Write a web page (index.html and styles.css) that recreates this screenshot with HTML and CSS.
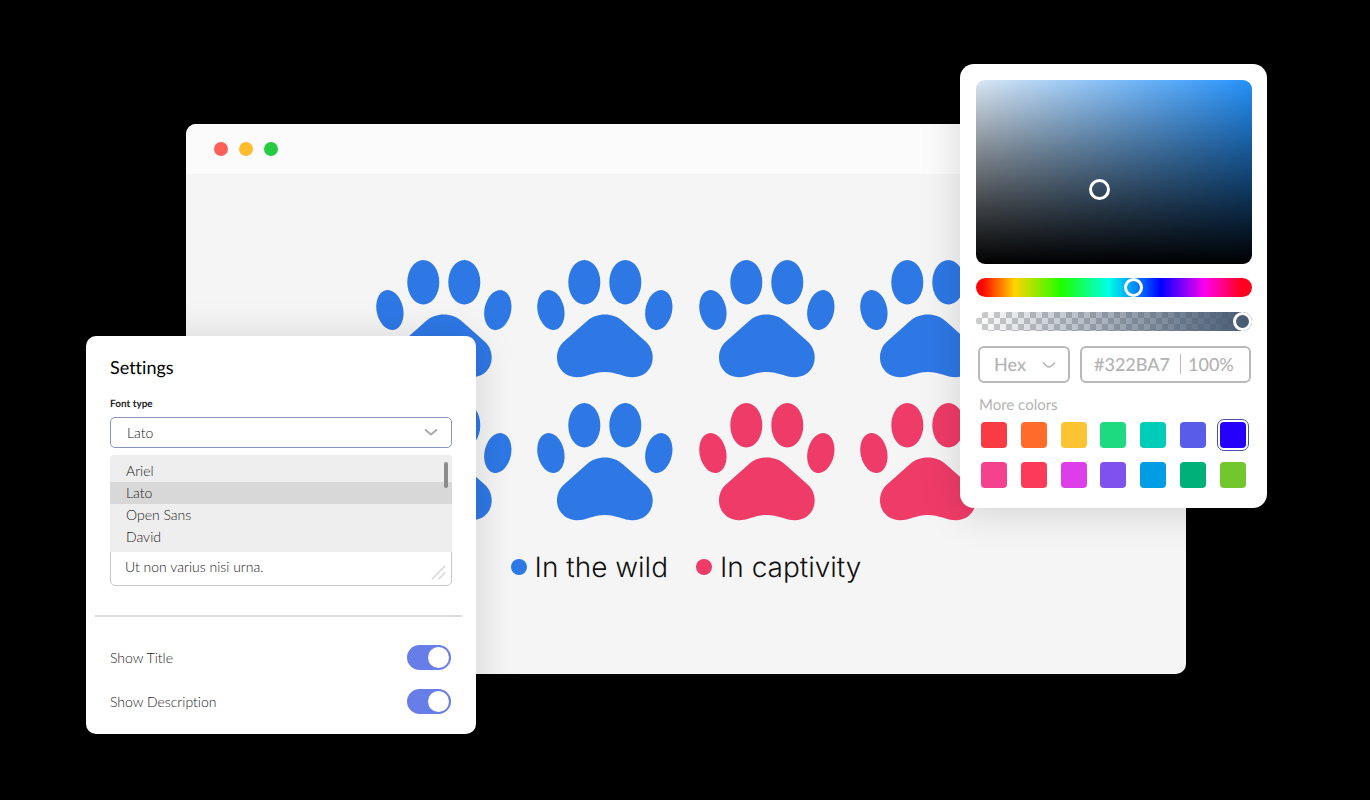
FILE: index.html
```
<!DOCTYPE html>
<html lang="en">
<head>
<meta charset="utf-8">
<title>Pictogram editor</title>
<link rel="stylesheet" href="styles.css">
</head>
<body>
<svg class="defs" aria-hidden="true">
  <symbol id="paw" viewBox="0 0 136 118">
    <ellipse cx="47.3" cy="22.2" rx="16" ry="22.2"/>
    <ellipse cx="88.3" cy="22.2" rx="16" ry="22.2"/>
    <ellipse cx="13.9" cy="50" rx="13.3" ry="20.2" transform="rotate(-12 13.9 50)"/>
    <ellipse cx="121.8" cy="50" rx="13.3" ry="20.2" transform="rotate(12 121.8 50)"/>
    <path d="M67.800 54.500C61 54.500 55 56.500 49.500 61.500L27 81.500C22.500 85.500 20 91 20 97.500C20 109 29 117.200 40 117.200C50 117.200 56 112 67.800 112C79.600 112 86 117.200 96 117.200C107 117.200 115.700 109 115.700 97.500C115.700 91 113 85.500 108.600 81.500L86.100 61.500C80.600 56.500 74.600 54.500 67.800 54.500Z"/>
  </symbol>
</svg>
<main class="stage">
  <section class="window">
    <header class="window-bar">
      <span class="dot dot-close"></span>
      <span class="dot dot-min"></span>
      <span class="dot dot-max"></span>
    </header>
    <div class="canvas">
      <div class="paws">
        <svg class="paw wild"><use href="#paw"/></svg>
        <svg class="paw wild"><use href="#paw"/></svg>
        <svg class="paw wild"><use href="#paw"/></svg>
        <svg class="paw wild"><use href="#paw"/></svg>
        <svg class="paw wild"><use href="#paw"/></svg>
        <svg class="paw wild"><use href="#paw"/></svg>
        <svg class="paw captive"><use href="#paw"/></svg>
        <svg class="paw captive"><use href="#paw"/></svg>
      </div>
      <div class="legend">
        <span class="legend-item"><i class="bullet bullet-wild"></i>In the wild</span>
        <span class="legend-item"><i class="bullet bullet-captive"></i>In captivity</span>
      </div>
    </div>
  </section>

  <section class="settings">
    <div class="settings-top">
      <h1 class="title">Settings</h1>
      <label class="field-label" for="font">Font type</label>
      <div class="combo">
        <select id="font" class="font-select">
          <option>Ariel</option>
          <option selected>Lato</option>
          <option>Open Sans</option>
          <option>David</option>
        </select>
        <svg class="combo-arrow" viewBox="0 0 14 8"><path d="M1 1.500L7 6.500L13 1.500"/></svg>
        <ul class="options" role="listbox" aria-label="Font type">
          <li class="option" role="option">Ariel</li>
          <li class="option active" role="option" aria-selected="true">Lato</li>
          <li class="option" role="option">Open Sans</li>
          <li class="option" role="option">David</li>
          <li class="thumb" role="presentation"></li>
        </ul>
      </div>
      <div class="note-wrap">
        <textarea class="note" aria-label="Description">Ut non varius nisi urna.</textarea>
        <svg class="grip" viewBox="0 0 16 16"><path d="M1 15L15 1M8 15L15 8"/></svg>
      </div>
    </div>
    <div class="toggles">
      <label class="toggle-row">Show Title<input class="toggle" type="checkbox" checked></label>
      <label class="toggle-row">Show Description<input class="toggle" type="checkbox" checked></label>
    </div>
  </section>

  <section class="picker">
    <div class="shade"><span class="shade-pin"></span></div>
    <input class="range hue" type="range" min="0" max="360" value="208" aria-label="Hue">
    <input class="range alpha" type="range" min="0" max="100" value="100" aria-label="Opacity">
    <div class="values">
      <div class="format">
        <select class="format-select" aria-label="Format"><option>Hex</option></select>
        <svg class="format-arrow" viewBox="0 0 14 8"><path d="M1 1.500C4 5 6 6 7 6C8 6 10 5 13 1.500"/></svg>
      </div>
      <div class="code">
        <input class="code-hex" value="#322BA7" aria-label="Hex value">
        <input class="code-alpha" value="100%" aria-label="Opacity value">
      </div>
    </div>
    <h2 class="more">More colors</h2>
    <div class="swatches">
      <button class="swatch red" aria-label="Red"></button>
      <button class="swatch orange" aria-label="Orange"></button>
      <button class="swatch yellow" aria-label="Yellow"></button>
      <button class="swatch green" aria-label="Green"></button>
      <button class="swatch teal" aria-label="Teal"></button>
      <button class="swatch indigo" aria-label="Indigo"></button>
      <button class="swatch blue selected" aria-label="Blue"></button>
      <button class="swatch pink" aria-label="Pink"></button>
      <button class="swatch rose" aria-label="Rose"></button>
      <button class="swatch magenta" aria-label="Magenta"></button>
      <button class="swatch violet" aria-label="Violet"></button>
      <button class="swatch sky" aria-label="Sky"></button>
      <button class="swatch emerald" aria-label="Emerald"></button>
      <button class="swatch lime" aria-label="Lime"></button>
    </div>
  </section>
</main>
</body>
</html>
```
FILE: styles.css
```
* { box-sizing: border-box; }
body { margin: 0; background: #000; font-family: Lato, "Liberation Sans", sans-serif; font-variant-ligatures: none; text-rendering: geometricPrecision; }
input, select, textarea, button { font: inherit; color: inherit; margin: 0; padding: 0; border: 0; background: none; outline: 0; appearance: none; text-rendering: inherit; }
.defs { display: none; }

.stage { position: relative; display: flex; min-height: 100vh; padding: 124px 184px 126px 186px; }

.window { flex: 1; display: flex; flex-direction: column; border-radius: 10px; overflow: hidden; background: #f5f5f5; }
.window-bar { display: flex; align-items: center; gap: 11px; height: 50px; padding: 0 28px; background: #fbfbfb; }
.dot { width: 14px; height: 14px; border-radius: 50%; }
.dot-close { background: #ff5f5b; }
.dot-min { background: #fbbd2e; }
.dot-max { background: #25cb40; }
.canvas { display: flex; flex-direction: column; align-items: center; padding-top: 86px; }
.paws { display: grid; grid-template-columns: repeat(4, 136px); justify-content: space-between; row-gap: 25px; width: 621px; max-width: 100%; }
.paw { display: block; width: 136px; height: 118px; }
.wild { fill: #2e78e6; }
.captive { fill: #ef3b68; }
.legend { display: flex; gap: 28px; margin-top: 28px; font-family: Inter, "Open Sans", sans-serif; font-size: 28px; font-weight: 300; line-height: 36px; color: #111; }
.legend-item { display: flex; align-items: center; gap: 8px; }
.bullet { width: 16px; height: 16px; border-radius: 50%; }
.bullet-wild { background: #2e78e6; }
.bullet-captive { background: #ef3b68; }

.settings { position: absolute; left: 86px; top: 336px; width: 390px; border-radius: 10px; background: #fff; box-shadow: 0 4px 40px rgba(0, 0, 0, .15); font-size: 14px; font-weight: 300; color: #222; }
.settings-top { margin: 0 14px 0 9px; padding: 19px 10px 29px 15px; border-bottom: 2px solid #dadddd; }
.title { margin: 0; font-size: 18px; font-weight: 400; line-height: 24px; color: #000; }
.field-label { display: block; margin: 18px 0 6px; font-size: 10px; font-weight: 700; line-height: 14px; }
.combo { position: relative; z-index: 1; }
.font-select { display: block; width: 100%; height: 31px; padding: 0 16px; border: 1px solid #8795bd; border-radius: 5px; background: #fff; }
.combo-arrow { position: absolute; right: 14px; top: 11px; width: 14px; height: 8px; fill: none; stroke: #aaa; stroke-width: 2; }
.options { position: absolute; left: 0; right: 0; top: 38px; margin: 0; padding: 5px 0 4px; list-style: none; background: #eee; border-radius: 4px 4px 0 0; }
.option { padding: 0 16px; line-height: 22px; }
.active { background: #d8d8d8; }
.thumb { position: absolute; right: 4px; top: 7px; width: 4px; height: 26px; border-radius: 2px; background: #8c8c8c; }
.note-wrap { position: relative; margin-top: 28px; }
.note { display: block; width: 100%; height: 110px; padding: 80px 14px 0; border: 1px solid #c8c8c8; border-radius: 5px; line-height: 20px; resize: none; overflow: hidden; }
.grip { position: absolute; right: 6px; bottom: 6px; width: 15px; height: 15px; fill: none; stroke: #ddd; stroke-width: 2; }
.toggles { padding: 18px 25px 11px 24px; }
.toggle-row { display: flex; justify-content: space-between; align-items: center; height: 44px; }
.toggle { display: flex; justify-content: flex-end; align-items: center; width: 44px; height: 25px; padding: 2px; border-radius: 13px; background: #677ee8; }
.toggle:not(:checked) { justify-content: flex-start; background: #bbb; }
.toggle::before { content: ""; width: 21px; height: 21px; border-radius: 50%; background: #fff; }

.picker { position: absolute; right: 103px; top: 64px; width: 307px; padding: 16px 15px 20px 16px; border-radius: 14px; background: #fff; box-shadow: 0 4px 40px rgba(0, 0, 0, .15); color: #b3b3b3; }
.shade { position: relative; height: 184px; border-radius: 9px; background: linear-gradient(to top, #000, rgba(0, 0, 0, .72) 30%, rgba(0, 0, 0, .42) 60%, rgba(0, 0, 0, 0)), linear-gradient(to right, #dbe7f3, #2491fb); }
.shade-pin { position: absolute; left: 41%; top: 54%; width: 21px; height: 21px; border: 3px solid #fff; border-radius: 50%; }
.range { display: block; width: 100%; height: 19px; border-radius: 10px; }
.range::-webkit-slider-thumb { appearance: none; width: 19px; height: 19px; border: 3px solid #fff; border-radius: 50%; background: transparent; }
.hue { margin-top: 14px; background: linear-gradient(to right, #f00 2%, #ffd400 14%, #1eff00 31%, #00ffe5 48%, #0086ff 58%, #00f 67%, #f0e 83%, #ff001e 96%); }
.alpha { margin-top: 15px; background: linear-gradient(to right, rgba(68, 88, 112, 0), #445870), repeating-conic-gradient(#ccc 0% 25%, #fff 0% 50%) 0 0 / 12px 12px; }
.values { display: flex; gap: 10px; margin: 15px 1px 0 2px; font-size: 18px; font-weight: 500; }
.format { position: relative; flex: none; width: 92px; }
.format-select { display: block; width: 100%; height: 37px; padding: 0 14px 2px; border: 2px solid #b9b9b9; border-radius: 6px; }
.format-arrow { position: absolute; right: 14px; top: 15px; width: 14px; height: 8px; fill: none; stroke: #b5b5b5; stroke-width: 1.5; }
.code { flex: 1; min-width: 0; display: flex; align-items: center; height: 37px; padding: 0 12px 2px; border: 2px solid #b9b9b9; border-radius: 6px; }
.code-hex { width: 87px; height: 20px; border-right: 1px solid #b9b9b9; }
.code-alpha { flex: 1; min-width: 0; height: 24px; padding-left: 7px; }
.more { margin: 12px 0 7px 3px; font-size: 15px; font-weight: 400; line-height: 20px; }
.swatches { display: grid; grid-template-columns: repeat(7, 26px); justify-content: space-between; row-gap: 14px; padding: 0 6px 0 5px; }
.swatch { height: 26px; border-radius: 4px; }
.selected { outline: 1px solid #4654a8; outline-offset: 2px; }
.red { background: #f93c44; }
.orange { background: #ff6b2b; }
.yellow { background: #fcc432; }
.green { background: #1dd97f; }
.teal { background: #00cdb8; }
.indigo { background: #575de9; }
.blue { background: #2600ff; }
.pink { background: #f4428f; }
.rose { background: #fc3b5a; }
.magenta { background: #dc3eea; }
.violet { background: #7f52ee; }
.sky { background: #009de5; }
.emerald { background: #00b079; }
.lime { background: #72c72e; }
```
